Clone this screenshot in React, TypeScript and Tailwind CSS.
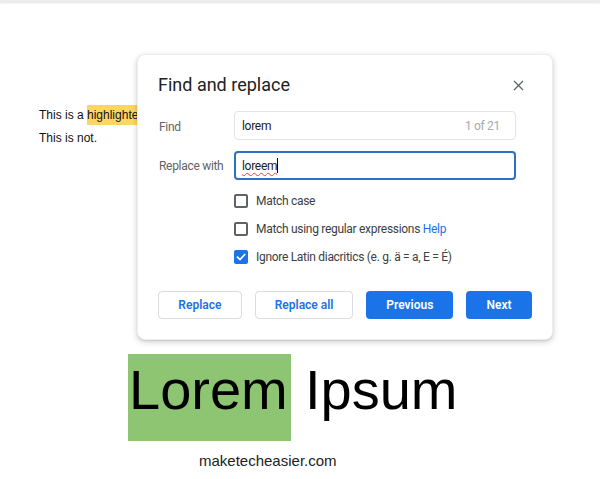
import React from "react"

function CheckBox({ checked }: { checked?: boolean }) {
  if (checked) {
    return (
      <div className="w-[14px] h-[14px] rounded-[2px] bg-[#1a73e8] flex items-center justify-center shrink-0">
        <svg width="10" height="10" viewBox="0 0 10 10" fill="none">
          <path d="M1.5 5.2 L4 7.6 L8.6 2.6" stroke="#fff" strokeWidth="1.7" strokeLinecap="square" />
        </svg>
      </div>
    )
  }
  return <div className="w-[14px] h-[14px] rounded-[2px] border-2 border-[#5f6368] shrink-0" />
}

export default function App() {
  return (
    <div className="relative w-[600px] h-[479px] bg-white overflow-hidden">
      {/* toolbar edge */}
      <div className="h-[2px] bg-[#ececec] shadow-[0_1px_2px_rgba(0,0,0,0.12)]" />

      {/* document text */}
      <div className="pt-[102px] pl-[39px] text-[12px] leading-[23px] text-[#111] font-['Liberation_Sans',Arial,sans-serif]">
        <div>
          This is a <span className="bg-[#fbd665] py-[3px]">highlighted text</span>
        </div>
        <div>This is not.</div>
      </div>

      <div className="mt-[204px] ml-[128px] flex text-[56px] text-black font-['Liberation_Sans',Arial,sans-serif]">
        <div className="bg-[#8dc572] h-[87px] w-[163px] pl-[1px] leading-[71px] pb-[16px]">Lorem</div>
        <div className="h-[87px] leading-[71px] pl-[14px]">Ipsum</div>
      </div>

      <div className="mt-[10px] ml-[199px] text-[15px] leading-[20px] text-[#222] font-['Liberation_Sans',Arial,sans-serif]">
        maketecheasier.com
      </div>

      {/* Find and replace dialog */}
      <div className="absolute left-[137px] top-[54px] w-[416px] h-[286px] bg-white rounded-[8px] border border-[#eeeeee] shadow-[0_2px_6px_rgba(0,0,0,0.18),0_1px_2px_rgba(0,0,0,0.1)] pl-[20px] pr-[20px] pt-[18px] font-['Roboto',Arial,sans-serif] text-[12px] tracking-[-0.3px]">
        <div className="flex items-center justify-between h-[24px] pr-[8px]">
          <div className="text-[18px] leading-[24px] tracking-normal text-[#202124]">Find and replace</div>
          <svg width="11" height="11" viewBox="0 0 11 11">
            <path d="M1 1 L10 10 M10 1 L1 10" stroke="#5f6368" strokeWidth="1.3" />
          </svg>
        </div>

        <div className="mt-[14px] flex items-center">
          <div className="w-[76px] text-[#5f6368] pl-[1px] pt-[2px]">Find</div>
          <div className="w-[282px] h-[29px] border border-[#e3e3e3] rounded-[4px] flex items-center justify-between pl-[7px] pr-[15px]">
            <span className="text-[#202124]">lorem</span>
            <span className="text-[#a6a9ad]">1 of 21</span>
          </div>
        </div>

        <div className="mt-[11px] flex items-center">
          <div className="w-[76px] text-[#5f6368] pl-[1px]">Replace with</div>
          <div className="w-[282px] h-[29px] border-2 border-[#2f6fbf] rounded-[4px] flex items-center pl-[6px]">
            <span className="text-[#202124] underline decoration-wavy decoration-[#e0413a] decoration-1 underline-offset-2">loreem</span>
            <span className="w-[1px] h-[15px] bg-black" />
          </div>
        </div>

        <div className="mt-[7px] ml-[76px] text-[#3c4043]">
          <div className="h-[28px] flex items-center gap-[8px]">
            <CheckBox />
            <span>Match case</span>
          </div>
          <div className="h-[28px] flex items-center gap-[8px]">
            <CheckBox />
            <span>
              Match using regular expressions <span className="text-[#1a73e8]">Help</span>
            </span>
          </div>
          <div className="h-[28px] flex items-center gap-[8px]">
            <CheckBox checked />
            <span>Ignore Latin diacritics (e. g. ä = a, E = É)</span>
          </div>
        </div>

        <div className="mt-[20px] flex gap-[13px] font-semibold tracking-normal">
          <button className="w-[84px] h-[28px] rounded-[4px] border border-[#dadce0] text-[#1a73e8] bg-white">Replace</button>
          <button className="w-[99px] h-[28px] rounded-[4px] border border-[#dadce0] text-[#1a73e8] bg-white">Replace all</button>
          <button className="w-[87px] h-[28px] rounded-[4px] bg-[#1a73e8] text-white">Previous</button>
          <button className="w-[66px] h-[28px] rounded-[4px] bg-[#1a73e8] text-white">Next</button>
        </div>
      </div>
    </div>
  )
}
